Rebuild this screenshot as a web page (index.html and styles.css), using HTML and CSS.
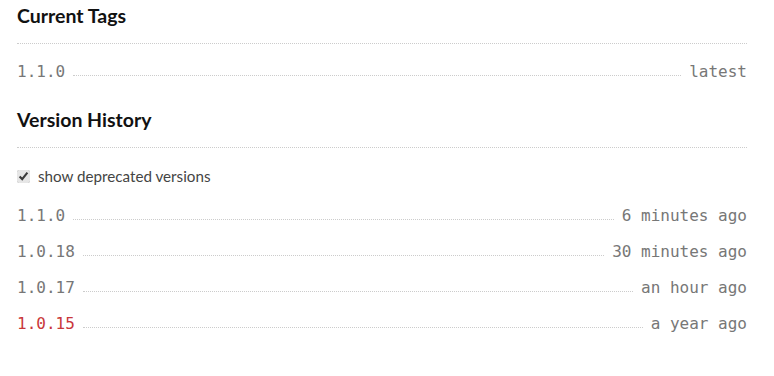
FILE: index.html
```html
<!DOCTYPE html>
<html lang="en">
<head>
    <meta charset="UTF-8">
    <title>Versions</title>
    <link rel="stylesheet" href="styles.css">
</head>
<body>
<div class="container">
    <h3 class="section-title">Current Tags</h3>
    <ul class="version-list tags">
        <li class="version-row">
            <span class="version">1.1.0</span>
            <span class="dots"></span>
            <span class="meta">latest</span>
        </li>
    </ul>

    <h3 class="section-title">Version History</h3>
    <label class="deprecated-toggle">
        <input type="checkbox" checked>
        show deprecated versions
    </label>
    <ul class="version-list">
        <li class="version-row">
            <span class="version">1.1.0</span>
            <span class="dots"></span>
            <span class="meta">6 minutes ago</span>
        </li>
        <li class="version-row">
            <span class="version">1.0.18</span>
            <span class="dots"></span>
            <span class="meta">30 minutes ago</span>
        </li>
        <li class="version-row">
            <span class="version">1.0.17</span>
            <span class="dots"></span>
            <span class="meta">an hour ago</span>
        </li>
        <li class="version-row deprecated">
            <span class="version">1.0.15</span>
            <span class="dots"></span>
            <span class="meta">a year ago</span>
        </li>
    </ul>
</div>
</body>
</html>
```

FILE: styles.css
```css
body {
    margin: 0;
    background: white;
    font-family: Lato, "Open Sans", sans-serif;
    color: #333;
}
.container {
    width: 730px;
    padding: 4px 0 0 17px;
}
.section-title {
    margin: 0;
    font-size: 19.5px;
    line-height: 24px;
    font-weight: bold;
    color: #111;
    padding-bottom: 15px;
    border-bottom: 1px dotted #ccc;
}
.version-list {
    list-style: none;
    margin: 0;
    padding: 0;
    display: flex;
    flex-direction: column;
    gap: 12px;
}
.version-list.tags {
    margin: 16px 0 24px;
}
.version-row {
    display: flex;
    height: 24px;
    line-height: 24px;
    font-family: "DejaVu Sans Mono", "Liberation Mono", monospace;
    font-size: 16px;
    color: #777;
}
.dots {
    flex: 1;
    margin: 0 8px 8px;
    border-bottom: 1px dotted #ccc;
}
.deprecated .version {
    color: #c9373a;
}
.deprecated-toggle {
    display: flex;
    align-items: center;
    gap: 8px;
    margin: 16px 0 16px;
    height: 24px;
    font-size: 15.2px;
    color: #444;
}
.deprecated-toggle input {
    margin: 0;
    width: 13px;
    height: 13px;
    accent-color: #e6e6e6;
}
```
